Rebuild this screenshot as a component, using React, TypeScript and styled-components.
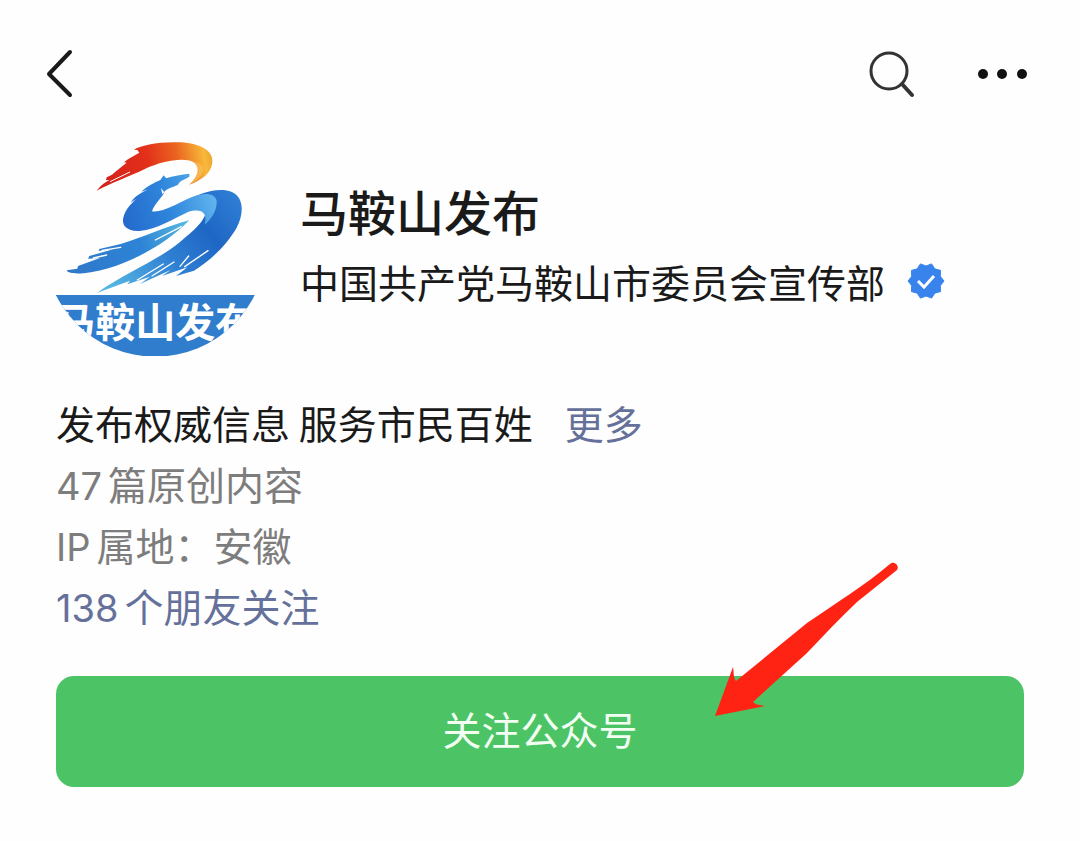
import React from "react";
import styled, { createGlobalStyle } from "styled-components";

const GlobalStyle = createGlobalStyle`
  * { box-sizing: border-box; }
  body {
    margin: 0;
    background: #fefefe;
    color: #1a1a1a;
    font-family: "Noto Sans CJK SC", sans-serif;
  }
`;

const Page = styled.div`
  padding: 44px 56px 54px;
`;

const TopBar = styled.header`
  display: flex;
  align-items: center;
  height: 60px;
  margin: 0 -4px 0 -12px;
`;

const IconButton = styled.button`
  display: flex;
  padding: 0;
  border: 0;
  background: none;
  color: #1a1a1a;
  cursor: pointer;
`;

const Actions = styled.div`
  display: flex;
  align-items: center;
  gap: 60px;
  margin-left: auto;
`;

const Profile = styled.section`
  display: flex;
  align-items: center;
  gap: 44px;
  margin-top: 36px;
`;

const Avatar = styled.svg`
  flex: none;
  width: 200px;
  height: 216px;
`;

const Name = styled.h1`
  margin: 0;
  font-size: 48px;
  line-height: 72px;
  font-weight: 500;
`;

const Owner = styled.p`
  display: flex;
  align-items: center;
  gap: 22px;
  margin: 0;
  padding-bottom: 6px;
  font-size: 39px;
  line-height: 70px;
  white-space: nowrap;
`;

const Details = styled.section`
  margin-top: 36px;
  font-size: 39px;
  line-height: 61px;
`;

const Line = styled.p<{ $muted?: boolean }>`
  margin: 0;
  color: ${(p) => (p.$muted ? "#7d7d7d" : "#1a1a1a")};
`;

const TextLink = styled.a`
  color: #65719a;
  text-decoration: none;
`;

const MoreLink = styled(TextLink)`
  margin-left: 32px;
`;

const Latin = styled.span`
  margin-right: 6px;
  font-family: Inter, sans-serif;
  font-size: 38px;
  font-weight: 400;
  line-height: 1;
`;

const FollowArea = styled.div`
  position: relative;
  margin-top: 40px;
`;

const FollowButton = styled.button`
  display: block;
  width: 100%;
  height: 111px;
  padding: 0 0 8px;
  border: 0;
  border-radius: 18px;
  background: #4cc466;
  color: #f4fff4;
  font-family: inherit;
  font-size: 39px;
  line-height: 60px;
  cursor: pointer;
`;

const Pointer = styled.svg`
  position: absolute;
  right: 126px;
  bottom: 69px;
  pointer-events: none;
`;

function Logo() {
  return (
    <Avatar viewBox="18 30 600 648" role="img" aria-label="马鞍山发布">
      <defs>
        <linearGradient id="flame" x1="140" y1="150" x2="490" y2="90" gradientUnits="userSpaceOnUse">
          <stop offset="0" stopColor="#d3201c" />
          <stop offset="0.45" stopColor="#e2301a" />
          <stop offset="0.7" stopColor="#ea6420" />
          <stop offset="0.93" stopColor="#f8b83a" />
          <stop offset="1" stopColor="#eaa52f" />
        </linearGradient>
        <linearGradient id="ribbon" x1="560" y1="190" x2="200" y2="480" gradientUnits="userSpaceOnUse">
          <stop offset="0" stopColor="#2f7fd6" />
          <stop offset="0.3" stopColor="#1f66c4" />
          <stop offset="0.6" stopColor="#2f80d4" />
          <stop offset="1" stopColor="#55b4e0" />
        </linearGradient>
        <linearGradient id="horse" x1="225" y1="290" x2="500" y2="200" gradientUnits="userSpaceOnUse">
          <stop offset="0" stopColor="#2469cc" />
          <stop offset="0.5" stopColor="#2f86dc" />
          <stop offset="1" stopColor="#62b6ee" />
        </linearGradient>
        <linearGradient id="tail" x1="50" y1="420" x2="415" y2="275" gradientUnits="userSpaceOnUse">
          <stop offset="0" stopColor="#2f77c9" />
          <stop offset="0.6" stopColor="#2d84d6" />
          <stop offset="1" stopColor="#58bbdf" />
        </linearGradient>
        <clipPath id="disc">
          <circle cx="316" cy="347" r="333" />
        </clipPath>
      </defs>
      <path
        fill="url(#flame)"
        d="M140 182C152 168 160 160 178 150L168 150L170 142L186 134C200 122 212 112 230 98L222 97C236 84 252 78 268 68L262 60L252 59C270 46 330 34 392 37C452 41 491 62 487 98C483 130 456 150 418 164C446 138 452 112 430 96C400 80 334 94 286 116C232 142 180 160 140 182Z"
      />
      <path d="M180 155L240 126" stroke="#fff" strokeWidth="3" />
      <path fill="#f8c25a" d="M418 164C446 138 452 112 430 96C470 98 472 136 418 164Z" opacity=".65" />
      <path
        fill="url(#ribbon)"
        d="M400 222C440 190 500 172 540 184C584 198 582 252 560 293C532 342 482 392 432 422L378 438L412 412L336 438L362 420L270 462L300 440L232 463L240 452L142 488C222 430 330 388 390 336C430 302 462 276 468 246Z"
      />
      <path
        fill="url(#horse)"
        d="M331 150L341 136L348 145C370 138 396 134 418 131L418 140C404 150 390 150 384 164C368 172 354 174 344 184C340 200 314 220 306 244C336 250 386 218 424 202C456 188 494 186 500 212C502 240 484 268 464 284C474 246 452 234 414 246C370 266 324 298 268 303C226 304 212 284 222 256C228 236 244 222 258 206L242 218C256 196 276 188 294 178L274 185C294 166 314 158 331 150Z"
      />
      <path fill="#fff" d="M333 174L343 187L337 192Z" />
      <path
        fill="url(#tail)"
        d="M418 271C345 290 280 322 212 342L148 357L146 363L190 358L118 378L114 386L150 384L84 408L82 416L50 421C56 436 114 432 170 416C256 392 356 336 418 271Z"
      />
      <path
        d="M156 361L212 352M130 384L170 375M394 290L316 330M262 450L340 402M306 438L372 396M390 409L416 378M404 410L474 362"
        stroke="#fff"
        strokeWidth="4"
        strokeLinecap="round"
      />
      <g clipPath="url(#disc)">
        <rect x="0" y="495" width="632" height="190" fill="#2f7dcc" />
        <text
          x="316"
          y="620"
          textAnchor="middle"
          fill="#fff"
          fontFamily='"Noto Sans CJK SC", sans-serif'
          fontSize="120"
          fontWeight="700"
        >
          马鞍山发布
        </text>
      </g>
    </Avatar>
  );
}

function VerifiedBadge() {
  const points = Array.from({ length: 20 }, (_, i) => {
    const radius = i % 2 === 0 ? 18 : 15;
    const angle = (Math.PI * (i + 1)) / 10 - Math.PI / 2;
    return `${19 + radius * Math.cos(angle)},${20 + radius * Math.sin(angle)}`;
  }).join(" ");
  return (
    <svg width="38" height="40" viewBox="0 0 38 40" role="img" aria-label="已认证">
      <polygon points={points} fill="#3883ec" stroke="#3883ec" strokeWidth="1" strokeLinejoin="round" />
      <path d="M11 20L17 26L27 15" fill="none" stroke="#fff" strokeWidth="3" />
    </svg>
  );
}

export default function App() {
  return (
    <>
      <GlobalStyle />
      <Page>
        <TopBar>
          <IconButton aria-label="返回">
            <svg width="32" height="52" viewBox="0 0 32 52" fill="none" stroke="currentColor" strokeWidth="4" strokeLinecap="round" strokeLinejoin="round">
              <path d="M26 4L5 26L26 47" />
            </svg>
          </IconButton>
          <Actions>
            <IconButton aria-label="搜索">
              <svg width="50" height="50" viewBox="0 0 50 50" fill="none" stroke="#333" strokeWidth="3" strokeLinecap="round">
                <circle cx="23" cy="22" r="18" />
                <path d="M36 35L46 46" strokeWidth="4" />
              </svg>
            </IconButton>
            <IconButton aria-label="更多操作">
              <svg width="52" height="12" viewBox="0 0 52 12" fill="#111">
                <circle cx="7" cy="6" r="5" />
                <circle cx="26" cy="6" r="5" />
                <circle cx="46" cy="6" r="5" />
              </svg>
            </IconButton>
          </Actions>
        </TopBar>
        <main>
          <Profile>
            <Logo />
            <div>
              <Name>马鞍山发布</Name>
              <Owner>
                中国共产党马鞍山市委员会宣传部
                <VerifiedBadge />
              </Owner>
            </div>
          </Profile>
          <Details>
            <Line>
              发布权威信息 服务市民百姓
              <MoreLink href="#more">更多</MoreLink>
            </Line>
            <Line $muted>
              <Latin>47</Latin>篇原创内容
            </Line>
            <Line $muted>
              <Latin>IP</Latin>属地：安徽
            </Line>
            <Line>
              <TextLink href="#friends">
                <Latin>138</Latin>个朋友关注
              </TextLink>
            </Line>
          </Details>
          <FollowArea>
            <FollowButton>关注公众号</FollowButton>
            <Pointer width="186" height="158" viewBox="0 0 186 158" aria-hidden="true">
              <path
                fill="#ff2314"
                d="M178 4C182 0 188 6 185 10L145 42C128 58 112 75 95 93L41 142C44 145 48 145 53 146L3 156L21 107C22 112 21 117 24 121L95 63C124 43 152 26 178 4Z"
              />
            </Pointer>
          </FollowArea>
        </main>
      </Page>
    </>
  );
}
